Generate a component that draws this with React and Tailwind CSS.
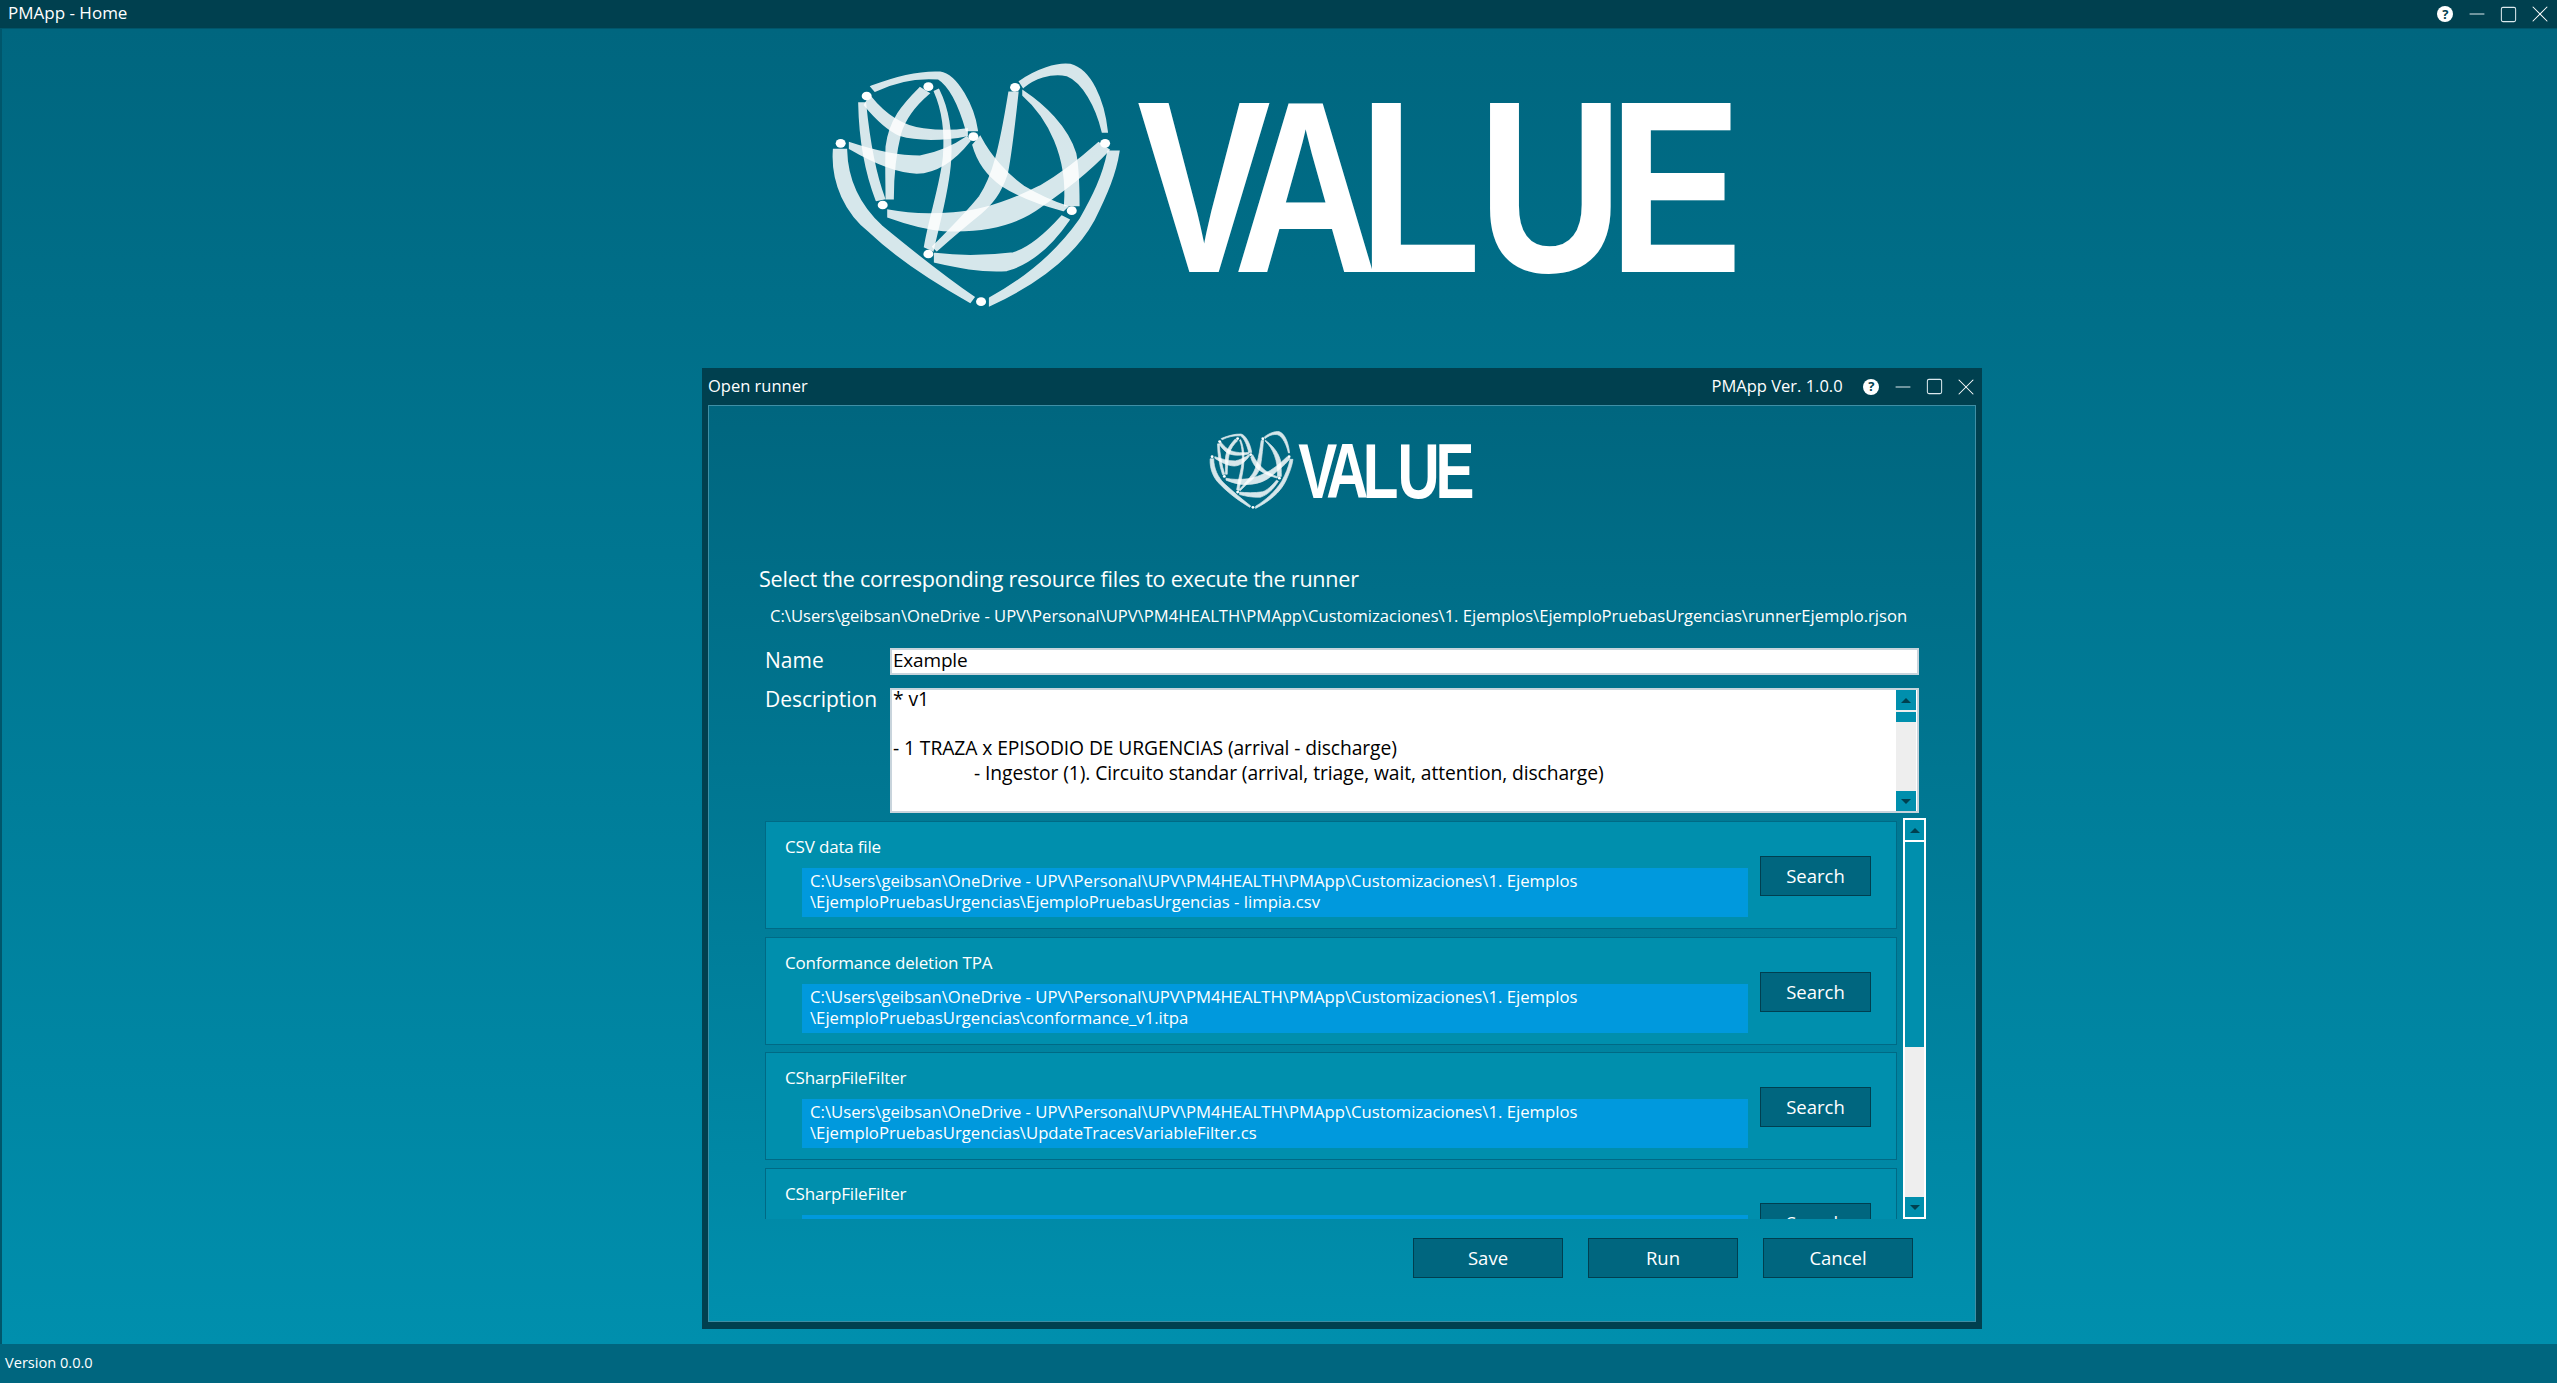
import { X, Minus, Square } from 'lucide-react'

const FILES = [
  { label: 'CSV data file', l1: 'C:\\Users\\geibsan\\OneDrive - UPV\\Personal\\UPV\\PM4HEALTH\\PMApp\\Customizaciones\\1. Ejemplos', l2: '\\EjemploPruebasUrgencias\\EjemploPruebasUrgencias - limpia.csv' },
  { label: 'Conformance deletion TPA', l1: 'C:\\Users\\geibsan\\OneDrive - UPV\\Personal\\UPV\\PM4HEALTH\\PMApp\\Customizaciones\\1. Ejemplos', l2: '\\EjemploPruebasUrgencias\\conformance_v1.itpa' },
  { label: 'CSharpFileFilter', l1: 'C:\\Users\\geibsan\\OneDrive - UPV\\Personal\\UPV\\PM4HEALTH\\PMApp\\Customizaciones\\1. Ejemplos', l2: '\\EjemploPruebasUrgencias\\UpdateTracesVariableFilter.cs' },
  { label: 'CSharpFileFilter', l1: 'C:\\Users\\geibsan\\OneDrive - UPV\\Personal\\UPV\\PM4HEALTH\\PMApp\\Customizaciones\\1. Ejemplos', l2: '\\EjemploPruebasUrgencias\\Filter.cs' },
]

const BANDS = [
  'M72,300 C65,400 110,490 180,545 C280,640 400,710 480,755 L490,742 C400,680 300,600 215,530 C150,470 110,390 108,300 Z',
  'M540,765 C680,700 790,620 850,510 C890,430 915,370 925,305 L895,305 C880,380 850,440 810,510 C740,610 640,690 540,745 Z',
  'M630,95 C680,60 740,40 780,45 C840,60 880,150 890,245 L878,245 C860,170 820,95 770,75 C720,65 670,85 640,110 Z',
  'M185,110 C250,85 330,65 390,68 C440,75 490,170 500,240 L470,240 C450,170 425,110 385,85 C320,80 250,95 195,122 Z',
  'M180,140 C220,190 270,230 340,238 C390,245 430,245 470,238 L470,255 C400,270 320,270 270,255 C225,235 190,195 165,165 Z',
  'M330,115 C280,165 240,210 230,290 C228,350 230,400 230,445 L248,445 C248,380 255,310 270,250 C285,200 320,160 355,130 Z',
  'M120,280 C180,300 260,320 330,320 C380,310 430,290 470,262 L478,272 C440,320 390,365 320,368 C250,365 180,330 120,295 Z',
  'M148,160 L165,160 C175,260 190,360 222,445 L200,450 C165,360 150,260 148,160 Z',
  'M385,120 C410,170 425,240 420,330 C415,420 385,520 368,600 L345,590 C360,500 395,400 402,320 C408,240 395,170 375,125 Z',
  'M598,128 L622,128 C612,220 600,320 590,370 C570,430 545,460 510,490 C460,530 420,565 380,600 L370,590 C420,540 470,490 510,440 C550,380 570,300 598,128 Z',
  'M640,125 C700,165 770,230 795,310 C805,360 805,420 805,465 L765,465 C770,400 760,330 735,270 C710,210 680,170 640,135 Z',
  'M865,280 L895,300 C830,370 760,420 690,470 C610,530 500,545 400,540 C340,535 290,520 235,500 L235,482 C300,495 370,495 430,490 C520,485 610,450 690,410 C760,370 820,320 865,280 Z',
  'M510,262 C540,320 590,375 640,410 C690,440 725,455 770,470 L760,480 C700,465 630,440 575,405 C540,380 505,340 490,285 Z',
  'M755,500 L775,510 C720,590 660,640 590,660 C510,665 440,650 375,635 L375,612 C440,620 530,620 610,610 C660,595 710,550 755,500 Z',
]

const NODES = [[170, 138], [355, 110], [615, 112], [885, 280], [490, 260], [92, 280], [218, 465], [785, 482], [355, 612], [513, 755]]

// coordinates are the big logo at 3x
function Logo({ className }) {
  return (
    <svg viewBox="60 30 2720 750" preserveAspectRatio="none" overflow="visible" className={className}>
      {BANDS.map((d, i) => <path key={i} d={d} fill="#ffffff" stroke="#ffffff" strokeWidth="7" opacity="0.84" />)}
      {NODES.map(([x, y], i) => <ellipse key={i} cx={x} cy={y} rx="15" ry="13" fill="#ffffff" />)}
      <text
        x="1196 1548 2006 2443 2920"
        y="666"
        transform="scale(0.82 1)"
        fill="#ffffff"
        fontFamily="'Liberation Sans', sans-serif"
        fontWeight="700"
        fontSize="734"
      >VALUE</text>
    </svg>
  )
}

function IconCell({ children }) {
  return <span className="w-[31.6px] flex items-center justify-center">{children}</span>
}

function WindowIcons() {
  return (
    <div className="flex items-center">
      <IconCell>
        <span className="w-[16px] h-[16px] rounded-full bg-white text-[#00404f] flex items-center justify-center text-[13px] font-bold leading-none">?</span>
      </IconCell>
      <IconCell><Minus size={24} strokeWidth={1} className="text-[#dce9ee]" /></IconCell>
      <IconCell><Square size={19} strokeWidth={1.3} className="text-[#dce9ee]" /></IconCell>
      <IconCell><X size={28} strokeWidth={0.9} className="text-white" /></IconCell>
    </div>
  )
}

function ScrollButton({ up }) {
  return (
    <div className="h-[20px] bg-[#008fad] flex items-center justify-center shrink-0">
      <span className={`w-0 h-0 border-x-[5px] border-x-transparent ${up ? 'border-b-[5px] border-b-[#00404f]' : 'border-t-[5px] border-t-[#00404f]'}`} />
    </div>
  )
}

function ActionButton({ children }) {
  return (
    <button className="w-[150px] h-[40px] bg-[#00667f] border border-[#003f50] text-white text-[18.5px] leading-[34px]">{children}</button>
  )
}

function FileCard({ file }) {
  return (
    <div className="h-[108px] shrink-0 mb-[7.5px] bg-[#008fad] border border-[#006a85] pl-[19px] pr-[25px] pt-[14px]">
      <div className="text-[17px] leading-[22px] text-white tracking-[-0.01em]">{file.label}</div>
      <div className="flex items-start mt-[10px]">
        <div className="ml-[17px] w-[946px] h-[49px] bg-[#0099dd] pl-[8px] pt-[2px] text-[16.7px] leading-[21px] text-white whitespace-nowrap overflow-hidden">
          <div>{file.l1}</div>
          <div>{file.l2}</div>
        </div>
        <button className="ml-[12px] -mt-[12px] w-[111px] h-[40px] bg-[#00667f] border border-[#003f50] text-white text-[18.5px] leading-[32px]">Search</button>
      </div>
    </div>
  )
}

export default function App() {
  return (
    <div className="w-[2557px] h-[1383px] flex flex-col overflow-hidden font-['Open_Sans',sans-serif] text-white bg-[#00667f]">
      {/* main title bar */}
      <div className="h-[29px] shrink-0 bg-[#00404f] flex items-center justify-between pl-[8px] pr-[1px] border-b border-[#00566b]">
        <span className="text-[17px] pb-[2px]">PMApp - Home</span>
        <WindowIcons />
      </div>

      <div className="flex-1 bg-gradient-to-b from-[#00667f] to-[#008fad] border-l-2 border-[#00566b] pt-[31px]">
        <Logo className="ml-[828px] w-[907px] h-[250px]" />

        {/* dialog */}
        <div className="ml-[700px] mt-[58px] w-[1280px] h-[961px] bg-[#00404f] px-[6px] pb-[7px] flex flex-col">
          <div className="h-[37px] shrink-0 flex items-center justify-between -mr-[6px]">
            <span className="text-[16.5px]">Open runner</span>
            <div className="flex items-center gap-[13px]">
              <span className="text-[16.5px]">PMApp Ver. 1.0.0</span>
              <WindowIcons />
            </div>
          </div>

          <div className="flex-1 border border-[#3f8fa5] bg-gradient-to-b from-[#00667f] to-[#008fad] flex flex-col min-h-0">
            <div className="pl-[500px] pt-[24px]">
              <Logo className="w-[264px] h-[80px]" />
            </div>

            <div className="ml-[50px] mt-[55px] text-[21.6px] leading-[28px] tracking-[-0.012em] whitespace-nowrap">Select the corresponding resource files to execute the runner</div>
            <div className="ml-[61px] mt-[11px] text-[16.6px] leading-[24px] whitespace-nowrap">C:\Users\geibsan\OneDrive - UPV\Personal\UPV\PM4HEALTH\PMApp\Customizaciones\1. Ejemplos\EjemploPruebasUrgencias\runnerEjemplo.rjson</div>

            <div className="flex mt-[20px] ml-[56px]">
              <span className="w-[125px] text-[21px] leading-[25px]">Name</span>
              <div className="w-[1029px] h-[27px] bg-white border-2 border-[#c8d4dc] text-black text-[19px] leading-[21px] pl-[1px] tracking-[-0.01em]">Example</div>
            </div>

            <div className="flex mt-[13px] ml-[56px]">
              <span className="w-[125px] text-[21px] leading-[23px] whitespace-nowrap">Description</span>
              <div className="w-[1029px] h-[125px] bg-white border-2 border-[#c8d4dc] flex">
                <div className="flex-1 text-black text-[19.3px] leading-[24.5px] pl-[1px] tracking-[-0.005em] whitespace-nowrap -mt-[3px]">
                  <div>* v1</div>
                  <div>&nbsp;</div>
                  <div>- 1 TRAZA x EPISODIO DE URGENCIAS (arrival - discharge)</div>
                  <div className="pl-[81px]">- Ingestor (1). Circuito standar (arrival, triage, wait, attention, discharge)</div>
                </div>
                <div className="w-[22px] bg-[#eeeeee] border-x border-white flex flex-col justify-between">
                  <div>
                    <ScrollButton up />
                    <div className="h-[10px] mt-[2px] bg-[#008fad]" />
                  </div>
                  <ScrollButton />
                </div>
              </div>
            </div>

            {/* resource list */}
            <div className="flex mt-[5px] ml-[56px] h-[401px]">
              <div className="w-[1132px] pt-[3px] overflow-hidden flex flex-col">
                {FILES.map((f, i) => <FileCard key={i} file={f} />)}
              </div>
              <div className="ml-[6px] w-[23px] border-2 border-white bg-[#eeeeee] flex flex-col justify-between">
                <div>
                  <ScrollButton up />
                  <div className="h-[207px] bg-[#008fad] border-t-2 border-white" />
                </div>
                <ScrollButton />
              </div>
            </div>

            <div className="flex justify-end gap-[25px] mt-[19px] pr-[62px]">
              <ActionButton>Save</ActionButton>
              <ActionButton>Run</ActionButton>
              <ActionButton>Cancel</ActionButton>
            </div>
          </div>
        </div>
      </div>

      {/* status bar */}
      <div className="h-[39px] shrink-0 bg-[#00667f] flex items-center pl-[5px] pb-[2px] text-[14.6px]">Version 0.0.0</div>
    </div>
  )
}
